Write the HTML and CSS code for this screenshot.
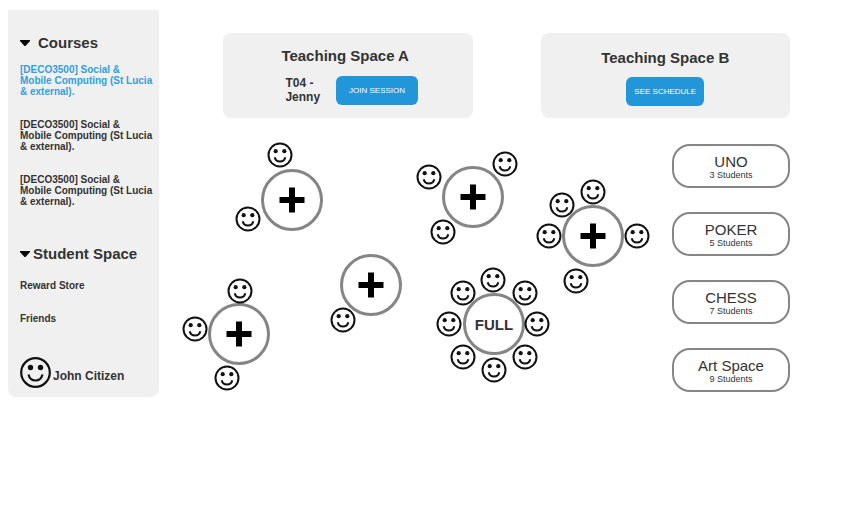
FILE: index.html
```html
<!DOCTYPE html>
<html lang="en">
<head>
<meta charset="utf-8">
<meta name="viewport" content="width=device-width, initial-scale=1">
<title>Student Space</title>
<link rel="stylesheet" href="styles.css">
</head>
<body>
<svg class="defs" aria-hidden="true">
  <symbol id="face" viewBox="0 0 26 26">
    <circle cx="13" cy="13" r="11.500" fill="#fff" stroke="#111" stroke-width="2"/>
    <circle cx="8.700" cy="9.200" r="2.100" fill="#111"/>
    <circle cx="17.300" cy="9.200" r="2.100" fill="#111"/>
    <path d="M7.700 15.200C9 21 17 21 18.300 15.200" fill="none" stroke="#111" stroke-width="2"/>
  </symbol>
  <symbol id="face-user" viewBox="0 0 31 31">
    <circle cx="15.500" cy="15.500" r="14.300" fill="none" stroke="#111" stroke-width="2.200"/>
    <circle cx="10.500" cy="10.500" r="2.700" fill="#111"/>
    <circle cx="20.500" cy="10.500" r="2.700" fill="#111"/>
    <path d="M8.500 17.500C10.500 25.500 20.500 25.500 22.500 17.500" fill="none" stroke="#111" stroke-width="2.200"/>
  </symbol>
  <symbol id="plus" viewBox="0 0 26 26">
    <path d="M10 .5h6V10h9.500v6H16v9.500h-6V16H.5v-6H10z" fill="#000"/>
  </symbol>
  <symbol id="caret" viewBox="0 0 10 6">
    <path d="M0 0h10v1L5.500 6h-1L0 1z" fill="#000"/>
  </symbol>
</svg>

<div class="page">
  <nav class="sidebar" aria-label="Main">
    <h2 class="section-title"><button type="button" class="toggle wide" aria-expanded="true"><svg class="caret"><use href="#caret"/></svg>Courses</button></h2>
    <ul class="courses">
      <li><a class="active" href="#">[DECO3500] Social &amp; Mobile Computing (St Lucia &amp; external).</a></li>
      <li><a href="#">[DECO3500] Social &amp; Mobile Computing (St Lucia &amp; external).</a></li>
      <li><a href="#">[DECO3500] Social &amp; Mobile Computing (St Lucia &amp; external).</a></li>
    </ul>
    <h2 class="section-title"><button type="button" class="toggle" aria-expanded="true"><svg class="caret"><use href="#caret"/></svg>Student Space</button></h2>
    <ul class="links">
      <li><a href="#">Reward Store</a></li>
      <li><a href="#">Friends</a></li>
    </ul>
    <a class="profile" href="#"><svg class="avatar"><use href="#face-user"/></svg><span class="user">John Citizen</span></a>
  </nav>

  <main class="main">
    <div class="spaces">
      <section class="space">
        <div class="space-body">
          <h2>Teaching Space A</h2>
          <div class="session">
            <p>T04 -<br>Jenny</p>
            <button type="button" class="action">JOIN SESSION</button>
          </div>
        </div>
      </section>
      <section class="space schedule">
        <h2>Teaching Space B</h2>
        <button type="button" class="action">SEE SCHEDULE</button>
      </section>
    </div>

    <div class="lobby">
      <div class="floor">
        <div class="table t1">
          <button type="button" class="hub" aria-label="Join table"><svg class="plus"><use href="#plus"/></svg></button>
          <svg class="seat"><use href="#face"/></svg>
          <svg class="seat"><use href="#face"/></svg>
        </div>
        <div class="table t2">
          <button type="button" class="hub" aria-label="Join table"><svg class="plus"><use href="#plus"/></svg></button>
          <svg class="seat"><use href="#face"/></svg>
          <svg class="seat"><use href="#face"/></svg>
          <svg class="seat"><use href="#face"/></svg>
        </div>
        <div class="table t3">
          <button type="button" class="hub" aria-label="Join table"><svg class="plus"><use href="#plus"/></svg></button>
          <svg class="seat"><use href="#face"/></svg>
          <svg class="seat"><use href="#face"/></svg>
          <svg class="seat"><use href="#face"/></svg>
          <svg class="seat"><use href="#face"/></svg>
          <svg class="seat"><use href="#face"/></svg>
        </div>
        <div class="table t4">
          <button type="button" class="hub" aria-label="Join table"><svg class="plus"><use href="#plus"/></svg></button>
          <svg class="seat"><use href="#face"/></svg>
        </div>
        <div class="table t5">
          <button type="button" class="hub" aria-label="Join table"><svg class="plus"><use href="#plus"/></svg></button>
          <svg class="seat"><use href="#face"/></svg>
          <svg class="seat"><use href="#face"/></svg>
          <svg class="seat"><use href="#face"/></svg>
        </div>
        <div class="table t6">
          <div class="hub">FULL</div>
          <svg class="seat"><use href="#face"/></svg>
          <svg class="seat"><use href="#face"/></svg>
          <svg class="seat"><use href="#face"/></svg>
          <svg class="seat"><use href="#face"/></svg>
          <svg class="seat"><use href="#face"/></svg>
          <svg class="seat"><use href="#face"/></svg>
          <svg class="seat"><use href="#face"/></svg>
          <svg class="seat"><use href="#face"/></svg>
        </div>
      </div>

      <div class="rooms">
        <button type="button" class="room"><span class="name">UNO</span><span class="count">3 Students</span></button>
        <button type="button" class="room"><span class="name">POKER</span><span class="count">5 Students</span></button>
        <button type="button" class="room"><span class="name">CHESS</span><span class="count">7 Students</span></button>
        <button type="button" class="room"><span class="name">Art Space</span><span class="count">9 Students</span></button>
      </div>
    </div>
  </main>
</div>
</body>
</html>
```
FILE: styles.css
```css
* { box-sizing: border-box; }

body {
  margin: 0;
  background: #fff;
  color: #333;
  font-family: "Liberation Sans", Arial, sans-serif;
}

h2, p, ul { margin: 0; padding: 0; }
ul { list-style: none; }
a { color: inherit; text-decoration: none; }
button { font-family: inherit; color: inherit; cursor: pointer; }
.defs { position: absolute; width: 0; height: 0; }

.page {
  display: flex;
  align-items: flex-start;
  gap: 24px;
  padding: 10px 78px 0 8px;
}

/* Sidebar */
.sidebar {
  flex: 0 0 151px;
  padding: 24px 6px 9px 12px;
  background: #f0f0f0;
  border-radius: 0 0 8px 8px;
  font-size: 10px;
  font-weight: bold;
  line-height: 11px;
}

.section-title { font-size: 15px; line-height: 18px; }

.toggle {
  display: flex;
  align-items: center;
  gap: 3px;
  padding: 0;
  border: 0;
  background: none;
  font-size: 15px;
  font-weight: bold;
  line-height: 18px;
  white-space: nowrap;
}

.toggle.wide { gap: 8px; }
.caret { width: 10px; height: 6px; }

.courses {
  display: grid;
  gap: 22px;
  margin: 12px 0 38px;
}

.active { color: #2f9fe0; }

.links {
  display: grid;
  gap: 22px;
  margin: 17px 0 33px;
}

.profile {
  display: flex;
  align-items: center;
  gap: 2px;
  font-size: 12px;
  line-height: 14px;
}

.avatar { width: 31px; height: 31px; }
.user { padding-top: 6px; }

/* Teaching spaces */
.main { flex: 1; padding-top: 23px; }

.spaces {
  display: flex;
  gap: 68px;
  padding-left: 40px;
}

.space {
  flex: 1;
  display: flex;
  flex-direction: column;
  align-items: center;
  padding: 13px 12px;
  background: #f0f0f0;
  border-radius: 8px;
}

.space h2 { font-size: 15px; line-height: 20px; }

.space-body { padding-left: 4px; }

.session {
  display: flex;
  gap: 16px;
  padding: 10px 0 0 4px;
  font-size: 12px;
  font-weight: bold;
  line-height: 14px;
}

.schedule { gap: 9px; padding-top: 15px; padding-bottom: 12px; }

.action {
  height: 29px;
  padding: 0 13px;
  border: 0;
  border-radius: 6px;
  background: #2196d9;
  color: #fff;
  font-size: 8px;
}

.schedule .action { padding: 0 8px; }

/* Lobby */
.lobby {
  display: flex;
  gap: 23px;
  margin-top: 22px;
}

.floor {
  position: relative;
  flex: 1;
  min-height: 254px;
}

.table { position: absolute; width: 62px; }

.hub {
  display: flex;
  align-items: center;
  justify-content: center;
  width: 62px;
  height: 62px;
  padding: 0;
  border: 3px solid #858585;
  border-radius: 50%;
  background: #fff;
  font-size: 15px;
  font-weight: bold;
}

.plus { width: 26px; height: 26px; }
.seat { position: absolute; width: 26px; height: 26px; }

.t1 { left: 78px; top: 29px; }
.t1 .seat:nth-child(2) { left: 6px; top: -27px; }
.t1 .seat:nth-child(3) { left: -26px; top: 37px; }

.t2 { left: 259px; top: 26px; }
.t2 .seat:nth-child(2) { left: -26px; top: -2px; }
.t2 .seat:nth-child(3) { left: 50px; top: -15px; }
.t2 .seat:nth-child(4) { left: -12px; top: 53px; }

.t3 { left: 379px; top: 65px; }
.t3 .seat:nth-child(2) { left: -13px; top: -13px; }
.t3 .seat:nth-child(3) { left: 18px; top: -26px; }
.t3 .seat:nth-child(4) { left: -26px; top: 18px; }
.t3 .seat:nth-child(5) { left: 62px; top: 18px; }
.t3 .seat:nth-child(6) { left: 1px; top: 63px; }

.t4 { left: 157px; top: 114px; }
.t4 .seat:nth-child(2) { left: -10px; top: 53px; }

.t5 { left: 25px; top: 163px; }
.t5 .seat:nth-child(2) { left: 19px; top: -25px; }
.t5 .seat:nth-child(3) { left: -26px; top: 13px; }
.t5 .seat:nth-child(4) { left: 6px; top: 62px; }

.t6 { left: 280px; top: 153px; }
.t6 .seat:nth-child(2) { left: 17px; top: -26px; }
.t6 .seat:nth-child(3) { left: 49px; top: -13px; }
.t6 .seat:nth-child(4) { left: 61px; top: 18px; }
.t6 .seat:nth-child(5) { left: 49px; top: 51px; }
.t6 .seat:nth-child(6) { left: 18px; top: 64px; }
.t6 .seat:nth-child(7) { left: -13px; top: 51px; }
.t6 .seat:nth-child(8) { left: -27px; top: 18px; }
.t6 .seat:nth-child(9) { left: -13px; top: -13px; }

.rooms {
  flex: 0 0 118px;
  display: flex;
  flex-direction: column;
  gap: 24px;
  padding-top: 4px;
}

.room {
  display: flex;
  flex-direction: column;
  align-items: center;
  justify-content: center;
  height: 44px;
  padding: 0;
  border: 2px solid #858585;
  border-radius: 18px;
  background: #fff;
}

.name { font-size: 15px; line-height: 17px; }
.count { font-size: 9px; line-height: 10px; }
```
